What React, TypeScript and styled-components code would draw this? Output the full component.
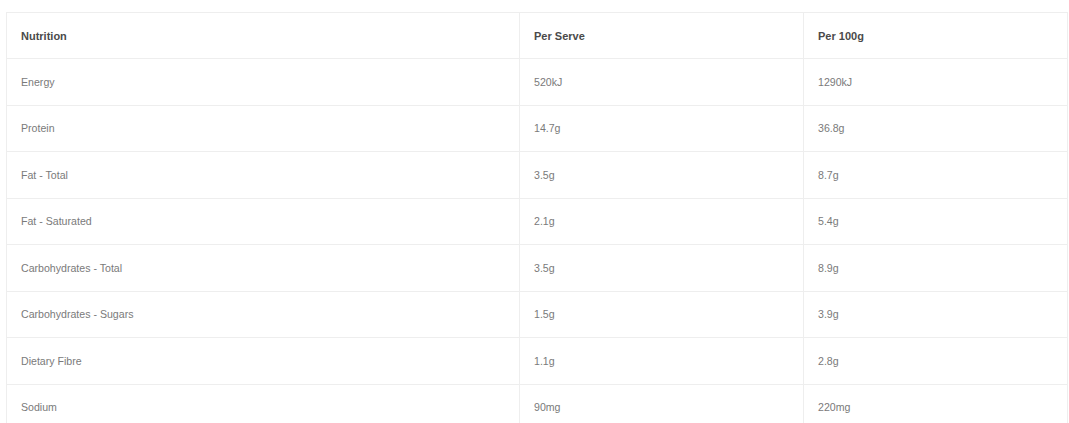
import React from "react";
import styled, { createGlobalStyle } from "styled-components";

const ROWS = [
  { id: 1, name: "Energy", serve: "520kJ", per100: "1290kJ" },
  { id: 2, name: "Protein", serve: "14.7g", per100: "36.8g" },
  { id: 3, name: "Fat - Total", serve: "3.5g", per100: "8.7g" },
  { id: 4, name: "Fat - Saturated", serve: "2.1g", per100: "5.4g" },
  { id: 5, name: "Carbohydrates - Total", serve: "3.5g", per100: "8.9g" },
  { id: 6, name: "Carbohydrates - Sugars", serve: "1.5g", per100: "3.9g" },
  { id: 7, name: "Dietary Fibre", serve: "1.1g", per100: "2.8g" },
  { id: 8, name: "Sodium", serve: "90mg", per100: "220mg" },
];

function App() {
  return (
    <Page>
      <GlobalStyle />
      <Table>
        <colgroup>
          <col style={{ width: 513 }} />
          <col style={{ width: 284 }} />
          <col />
        </colgroup>
        <thead>
          <tr>
            <Head>Nutrition</Head>
            <Head>Per Serve</Head>
            <Head>Per 100g</Head>
          </tr>
        </thead>
        <tbody>
          {ROWS.map((row) => (
            <tr key={row.id}>
              <Cell>{row.name}</Cell>
              <Cell>{row.serve}</Cell>
              <Cell>{row.per100}</Cell>
            </tr>
          ))}
        </tbody>
      </Table>
    </Page>
  );
}

export default App;

const GlobalStyle = createGlobalStyle`
  body {
    margin: 0;
    background: #fff;
    font-family: "Liberation Sans", Arial, sans-serif;
  }
`;

const Page = styled.div`
  padding: 12px 1px 0 6px;
`;

const Table = styled.table`
  width: 100%;
  border-collapse: collapse;
  table-layout: fixed;
  border: 1px solid #eeeeee;
`;

const Head = styled.th`
  height: 46px;
  padding: 0 14px;
  text-align: left;
  font-size: 11px;
  font-weight: 700;
  color: #4a4a4a;
  border: 1px solid #eeeeee;
  box-sizing: border-box;
`;

const Cell = styled.td`
  height: 46.5px;
  padding: 0 14px;
  font-size: 10.6px;
  color: #7a7a7a;
  border: 1px solid #eeeeee;
  box-sizing: border-box;
`;
